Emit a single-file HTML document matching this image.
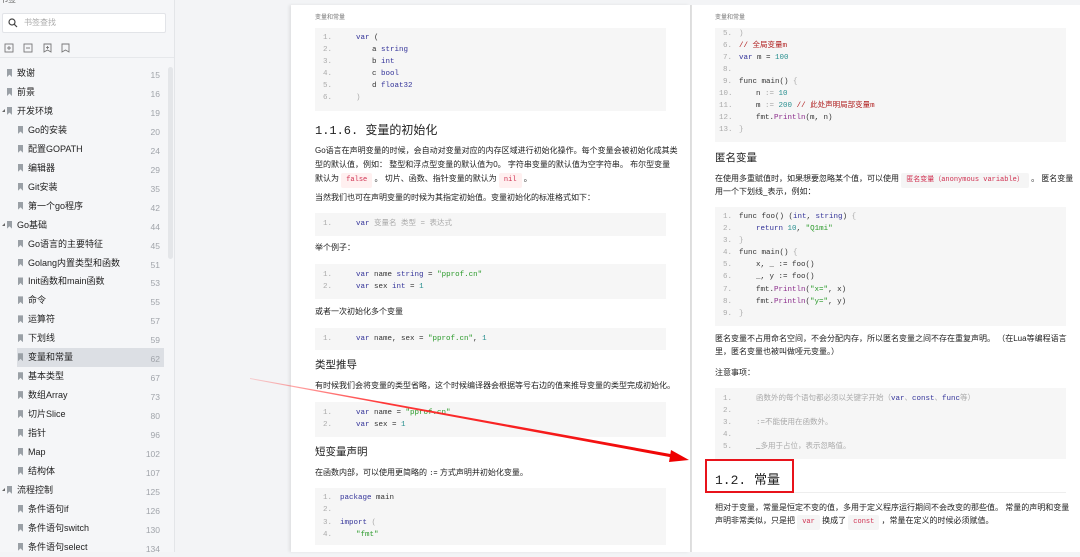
<!DOCTYPE html>
<html><head><meta charset="utf-8">
<style>
*{margin:0;padding:0;box-sizing:border-box}
body{width:1080px;height:552px;overflow:hidden;background:#f3f4f6;position:relative;font-family:"Liberation Sans","Noto Sans CJK SC",sans-serif;color:#333}
.a{position:absolute;white-space:nowrap}
#side{position:absolute;left:0;top:0;width:175px;height:552px;background:#f5f6f8;border-right:1px solid #e3e5e8}
.it{position:absolute;font-size:9px;color:#222;height:19px;line-height:19px}
.it .bm{display:inline-block;width:5px;height:8px;background:#9aa0a6;vertical-align:-1px;margin-right:5px;clip-path:polygon(0 0,100% 0,100% 100%,50% 70%,0 100%)}
.pn{position:absolute;left:130px;width:30px;text-align:right;font-size:8.5px;color:#a0a4aa}
.page{position:absolute;top:5px;height:547px;background:#fff}
.code{position:absolute;background:#f6f6f6}
.ln{position:absolute;font-family:"Liberation Mono","Noto Sans CJK SC",monospace;font-size:7.5px;color:#333;white-space:pre;line-height:12px}
.n{color:#aaa}
.k{color:#333399;font-weight:normal}
.s{color:#2a9a2a}
.c{color:#b02020}
.num{color:#2a9090}
.f{color:#8a2a8a}
.t{position:absolute;font-size:8px;color:#222;white-space:nowrap;line-height:13px}
.h{position:absolute;color:#222;white-space:nowrap}
.ic{display:inline-block;background:#fff0f0;color:#d03050;font-family:"Liberation Mono",monospace;font-size:7px;padding:1px 5px;border-radius:2px}
.hd{position:absolute;font-size:6px;color:#777}
</style></head><body>

<div id="side">
 <div class="a" style="left:0;top:-6px;font-size:8px;color:#555">书签</div>
 <div class="a" style="left:2px;top:13px;width:164px;height:20px;background:#fff;border:1px solid #e2e4e8;border-radius:2px"></div>
 <svg class="a" style="left:8px;top:18px" width="10" height="10"><circle cx="4" cy="4" r="3" fill="none" stroke="#444" stroke-width="1.2"/><line x1="6.3" y1="6.3" x2="9" y2="9" stroke="#444" stroke-width="1.2"/></svg>
 <div class="a" style="left:24px;top:17px;font-size:8px;color:#aaa">书签查找</div>
 <svg class="a" style="left:4px;top:43px" width="70" height="10" fill="none" stroke="#777" stroke-width="0.9">
  <rect x="1" y="1" width="8" height="8"/><line x1="3" y1="5" x2="7" y2="5"/><line x1="5" y1="3" x2="5" y2="7"/>
  <rect x="20" y="1" width="8" height="8"/><line x1="22" y1="5" x2="26" y2="5"/>
  <path d="M40 1h7v8l-3.5-2-3.5 2z"/><line x1="42" y1="4.5" x2="45" y2="4.5"/><line x1="43.5" y1="3" x2="43.5" y2="6"/>
  <path d="M58 1h7v8l-3.5-2-3.5 2z"/>
 </svg>
 <div class="a" style="left:0;top:57px;width:174px;height:1px;background:#e6e8eb"></div>
 <div class="a" style="left:168px;top:67px;width:5px;height:192px;background:#e4e6e9;border-radius:3px"></div>
 <div class="a" style="left:17px;top:348px;width:147px;height:19px;background:#dcdfe4"></div>
</div>

<div id="items"></div>

<div class="page" style="left:291px;width:399px;box-shadow:-2px 0 3px rgba(0,0,0,0.08)"></div>
<div class="page" style="left:691px;width:389px;border-left:1px solid #e0e0e0"></div>
<div class="a" style="left:690px;top:5px;width:1px;height:547px;background:#ddd"></div>

<div class="hd" style="left:315px;top:12px">变量和常量</div>
<div class="code" style="left:315px;top:28px;width:351px;height:83px"></div>
<div class="ln" style="left:323px;top:32px"><span class="n">1.</span></div><div class="ln" style="left:356px;top:32px"><span class="k">var</span> (</div>
<div class="ln" style="left:323px;top:44px"><span class="n">2.</span></div><div class="ln" style="left:372px;top:44px">a <span class="k">string</span></div>
<div class="ln" style="left:323px;top:56px"><span class="n">3.</span></div><div class="ln" style="left:372px;top:56px">b <span class="k">int</span></div>
<div class="ln" style="left:323px;top:68px"><span class="n">4.</span></div><div class="ln" style="left:372px;top:68px">c <span class="k">bool</span></div>
<div class="ln" style="left:323px;top:80px"><span class="n">5.</span></div><div class="ln" style="left:372px;top:80px">d <span class="k">float32</span></div>
<div class="ln" style="left:323px;top:92px"><span class="n">6.</span></div><div class="ln" style="left:356px;top:92px"><span class="n">)</span></div>

<div class="h" style="left:315px;top:121px;font-size:12px;font-family:'Liberation Mono','Noto Sans CJK SC',monospace">1.1.6. <span style="font-family:'Noto Sans CJK SC',sans-serif">变量的初始化</span></div>
<div class="t" style="left:315px;top:144px">Go语言在声明变量的时候，会自动对变量对应的内存区域进行初始化操作。每个变量会被初始化成其类</div>
<div class="t" style="left:315px;top:158px">型的默认值，例如： 整型和浮点型变量的默认值为0。 字符串变量的默认值为空字符串。 布尔型变量</div>
<div class="t" style="left:315px;top:172px">默认为 <span class="ic">false</span> 。 切片、函数、指针变量的默认为 <span class="ic">nil</span> 。</div>
<div class="t" style="left:315px;top:191px">当然我们也可在声明变量的时候为其指定初始值。变量初始化的标准格式如下：</div>
<div class="code" style="left:315px;top:213px;width:351px;height:23px"></div>
<div class="ln" style="left:323px;top:218px"><span class="n">1.</span></div><div class="ln" style="left:356px;top:218px"><span class="k">var</span> <span class="n">变量名 类型 = 表达式</span></div>
<div class="t" style="left:315px;top:241px">举个例子：</div>
<div class="code" style="left:315px;top:264px;width:351px;height:35px"></div>
<div class="ln" style="left:323px;top:269px"><span class="n">1.</span></div><div class="ln" style="left:356px;top:269px"><span class="k">var</span> name <span class="k">string</span> = <span class="s">"pprof.cn"</span></div>
<div class="ln" style="left:323px;top:281px"><span class="n">2.</span></div><div class="ln" style="left:356px;top:281px"><span class="k">var</span> sex <span class="k">int</span> = <span class="num">1</span></div>
<div class="t" style="left:315px;top:305px">或者一次初始化多个变量</div>
<div class="code" style="left:315px;top:328px;width:351px;height:22px"></div>
<div class="ln" style="left:323px;top:333px"><span class="n">1.</span></div><div class="ln" style="left:356px;top:333px"><span class="k">var</span> name, sex = <span class="s">"pprof.cn"</span>, <span class="num">1</span></div>
<div class="h" style="left:315px;top:357px;font-size:10.5px">类型推导</div>
<div class="t" style="left:315px;top:379px">有时候我们会将变量的类型省略，这个时候编译器会根据等号右边的值来推导变量的类型完成初始化。</div>
<div class="code" style="left:315px;top:402px;width:351px;height:35px"></div>
<div class="ln" style="left:323px;top:407px"><span class="n">1.</span></div><div class="ln" style="left:356px;top:407px"><span class="k">var</span> name = <span class="s">"pprof.cn"</span></div>
<div class="ln" style="left:323px;top:419px"><span class="n">2.</span></div><div class="ln" style="left:356px;top:419px"><span class="k">var</span> sex = <span class="num">1</span></div>
<div class="h" style="left:315px;top:444px;font-size:10.5px">短变量声明</div>
<div class="t" style="left:315px;top:466px">在函数内部，可以使用更简略的 <span style="font-family:'Liberation Mono',monospace;font-size:7px">:=</span> 方式声明并初始化变量。</div>
<div class="code" style="left:315px;top:488px;width:351px;height:57px"></div>
<div class="ln" style="left:323px;top:492px"><span class="n">1.</span></div><div class="ln" style="left:340px;top:492px"><span class="k">package</span> main</div>
<div class="ln" style="left:323px;top:504px"><span class="n">2.</span></div>
<div class="ln" style="left:323px;top:517px"><span class="n">3.</span></div><div class="ln" style="left:340px;top:517px"><span class="k">import</span> <span class="n">(</span></div>
<div class="ln" style="left:323px;top:529px"><span class="n">4.</span></div><div class="ln" style="left:356px;top:529px"><span class="s">"fmt"</span></div>

<div class="hd" style="left:715px;top:12px">变量和常量</div>
<div class="code" style="left:715px;top:28px;width:351px;height:114px"></div>
<div class="ln" style="left:723px;top:28px"><span class="n">5.</span></div><div class="ln" style="left:739px;top:28px"><span class="n">)</span></div>
<div class="ln" style="left:723px;top:40px"><span class="n">6.</span></div><div class="ln" style="left:739px;top:40px"><span class="c">// 全局变量m</span></div>
<div class="ln" style="left:723px;top:52px"><span class="n">7.</span></div><div class="ln" style="left:739px;top:52px"><span class="k">var</span> m = <span class="num">100</span></div>
<div class="ln" style="left:723px;top:64px"><span class="n">8.</span></div>
<div class="ln" style="left:723px;top:76px"><span class="n">9.</span></div><div class="ln" style="left:739px;top:76px">func main() <span class="n">{</span></div>
<div class="ln" style="left:719px;top:88px"><span class="n">10.</span></div><div class="ln" style="left:756px;top:88px">n <span class="n">:=</span> <span class="num">10</span></div>
<div class="ln" style="left:719px;top:100px"><span class="n">11.</span></div><div class="ln" style="left:756px;top:100px">m <span class="n">:=</span> <span class="num">200</span> <span class="c">// 此处声明局部变量m</span></div>
<div class="ln" style="left:719px;top:112px"><span class="n">12.</span></div><div class="ln" style="left:756px;top:112px">fmt.<span class="f">Println</span>(m, n)</div>
<div class="ln" style="left:719px;top:124px"><span class="n">13.</span></div><div class="ln" style="left:739px;top:124px"><span class="n">}</span></div>
<div class="h" style="left:715px;top:150px;font-size:10.5px">匿名变量</div>
<div class="t" style="left:715px;top:172px">在使用多重赋值时，如果想要忽略某个值，可以使用 <span class="ic" style="background:#f5f5f5">匿名变量（anonymous variable）</span> 。 匿名变量</div>
<div class="t" style="left:715px;top:185px">用一个下划线_表示，例如：</div>
<div class="code" style="left:715px;top:207px;width:351px;height:119px"></div>
<div class="ln" style="left:723px;top:211px"><span class="n">1.</span></div><div class="ln" style="left:739px;top:211px">func foo() (<span class="k">int</span>, <span class="k">string</span>) <span class="n">{</span></div>
<div class="ln" style="left:723px;top:223px"><span class="n">2.</span></div><div class="ln" style="left:756px;top:223px"><span class="k">return</span> <span class="num">10</span>, <span class="s">"Q1mi"</span></div>
<div class="ln" style="left:723px;top:235px"><span class="n">3.</span></div><div class="ln" style="left:739px;top:235px"><span class="n">}</span></div>
<div class="ln" style="left:723px;top:247px"><span class="n">4.</span></div><div class="ln" style="left:739px;top:247px">func main() <span class="n">{</span></div>
<div class="ln" style="left:723px;top:259px"><span class="n">5.</span></div><div class="ln" style="left:756px;top:259px">x, _ := foo()</div>
<div class="ln" style="left:723px;top:271px"><span class="n">6.</span></div><div class="ln" style="left:756px;top:271px">_, y := foo()</div>
<div class="ln" style="left:723px;top:284px"><span class="n">7.</span></div><div class="ln" style="left:756px;top:284px">fmt.<span class="f">Println</span>(<span class="s">"x="</span>, x)</div>
<div class="ln" style="left:723px;top:296px"><span class="n">8.</span></div><div class="ln" style="left:756px;top:296px">fmt.<span class="f">Println</span>(<span class="s">"y="</span>, y)</div>
<div class="ln" style="left:723px;top:308px"><span class="n">9.</span></div><div class="ln" style="left:739px;top:308px"><span class="n">}</span></div>
<div class="t" style="left:715px;top:332px">匿名变量不占用命名空间，不会分配内存，所以匿名变量之间不存在重复声明。 （在Lua等编程语言</div>
<div class="t" style="left:715px;top:345px">里，匿名变量也被叫做哑元变量。）</div>
<div class="t" style="left:715px;top:366px">注意事项：</div>
<div class="code" style="left:715px;top:388px;width:351px;height:71px"></div>
<div class="ln" style="left:723px;top:393px"><span class="n">1.</span></div><div class="ln" style="left:756px;top:393px"><span class="n">函数外的每个语句都必须以关键字开始（</span><span class="k">var</span><span class="n">、</span><span class="k">const</span><span class="n">、</span><span class="k">func</span><span class="n">等）</span></div>
<div class="ln" style="left:723px;top:405px"><span class="n">2.</span></div>
<div class="ln" style="left:723px;top:417px"><span class="n">3.</span></div><div class="ln" style="left:756px;top:417px"><span class="n">:=不能使用在函数外。</span></div>
<div class="ln" style="left:723px;top:429px"><span class="n">4.</span></div>
<div class="ln" style="left:723px;top:441px"><span class="n">5.</span></div><div class="ln" style="left:756px;top:441px">_<span class="n">多用于占位，表示忽略值。</span></div>
<div class="a" style="left:705px;top:459px;width:89px;height:34px;border:2px solid #e8131b"></div>
<div class="a" style="left:794px;top:492px;width:272px;height:1px;background:#eee"></div>
<div class="h" style="left:715px;top:469px;font-size:13px;font-family:'Liberation Mono','Noto Sans CJK SC',monospace">1.2. <span style="font-family:'Noto Sans CJK SC',sans-serif">常量</span></div>
<div class="t" style="left:715px;top:501px">相对于变量，常量是恒定不变的值，多用于定义程序运行期间不会改变的那些值。 常量的声明和变量</div>
<div class="t" style="left:715px;top:514px">声明非常类似，只是把 <span class="ic" style="background:#f5f5f5">var</span> 换成了 <span class="ic" style="background:#f5f5f5">const</span> ，常量在定义的时候必须赋值。</div>

<svg class="a" style="left:0;top:0" width="1080" height="552">
 <defs><linearGradient id="g" x1="250" y1="378" x2="690" y2="460" gradientUnits="userSpaceOnUse"><stop offset="0" stop-color="#f33" stop-opacity="0.2"/><stop offset="0.3" stop-color="#f22" stop-opacity="0.9"/><stop offset="1" stop-color="#e00"/></linearGradient></defs>
 <polygon points="250,378 676,455 675,458 250,379" fill="url(#g)"/>
 <polygon points="671,450 689,460 669,462" fill="#e00"/>
</svg>

<script>
var d=[["致谢",15,0],["前景",16,0],["开发环境",19,0,1],["Go的安装",20,1],["配置GOPATH",24,1],["编辑器",29,1],["Git安装",35,1],["第一个go程序",42,1],["Go基础",44,0,1],["Go语言的主要特征",45,1],["Golang内置类型和函数",51,1],["Init函数和main函数",53,1],["命令",55,1],["运算符",57,1],["下划线",59,1],["变量和常量",62,1],["基本类型",67,1],["数组Array",73,1],["切片Slice",80,1],["指针",96,1],["Map",102,1],["结构体",107,1],["流程控制",125,0,1],["条件语句if",126,1],["条件语句switch",130,1],["条件语句select",134,1]];
var h="";d.forEach(function(e,i){var y=64+i*18.95;var x=e[2]?18:7;
h+='<div class="it" style="left:'+x+'px;top:'+y+'px"><span class="bm"></span>'+e[0]+'</div>';
if(e[3])h+='<div class="a" style="left:2px;top:'+(y+7)+'px;width:0;height:0;border-left:3px solid transparent;border-bottom:3px solid #666"></div>';
h+='<div class="pn" style="top:'+(y+6)+'px">'+e[1]+'</div>';});
document.getElementById("items").innerHTML=h;
</script>
</body></html>
